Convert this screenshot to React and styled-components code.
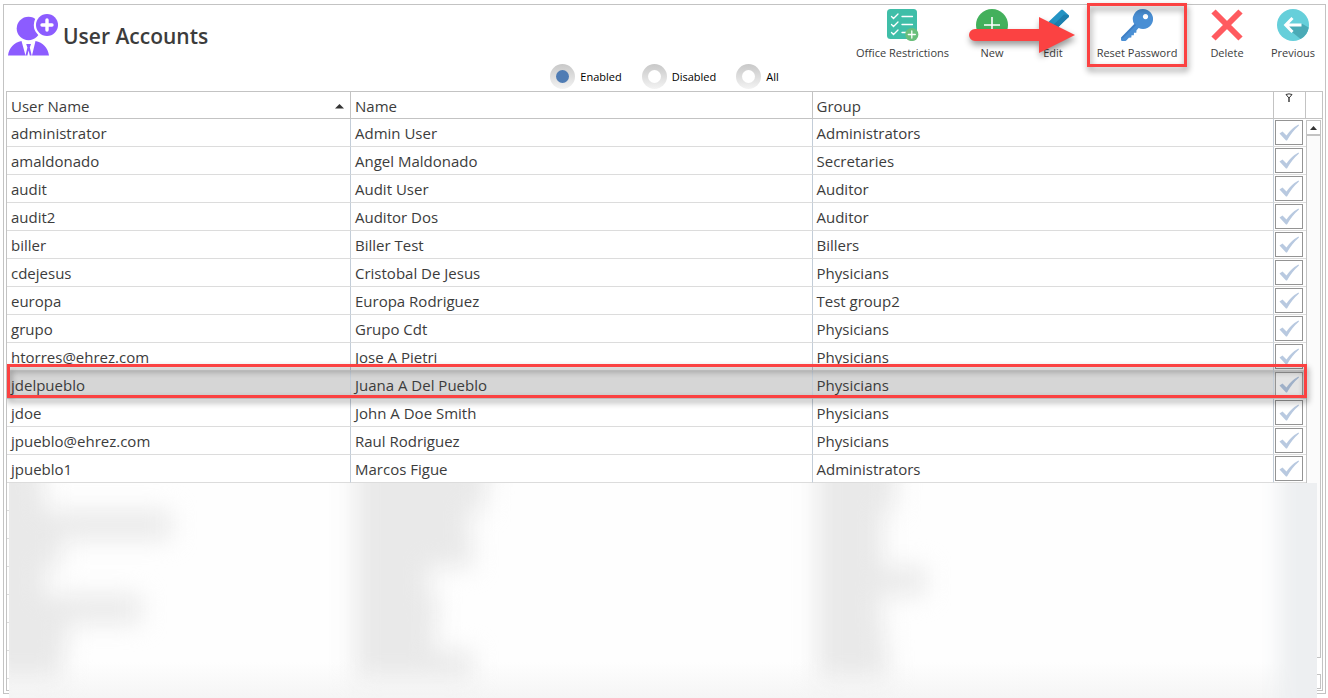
import React, { useState } from "react";
import styled, { createGlobalStyle, css } from "styled-components";

const line = "#c3c3c3";
const red = "#fb4242";

const GlobalStyle = createGlobalStyle`
  * { box-sizing: border-box; }
  body {
    margin: 0;
    background: #fff;
    color: #3c3c3c;
    font-family: "Open Sans", "Noto Sans", sans-serif;
    font-size: 15px;
    line-height: 20px;
  }
`;

const Page = styled.div`
  display: flex;
  height: 100vh;
  min-height: 520px;
  padding: 4px 2px 4px 3px;
  overflow: hidden;
`;

const Frame = styled.main`
  display: flex;
  flex: 1;
  flex-direction: column;
  min-width: 0;
  padding: 0 2px 2px;
  border: 1px solid ${line};
`;

const Header = styled.header`
  display: flex;
  justify-content: space-between;
  height: 58px;
`;

const Heading = styled.div`
  display: flex;
  align-items: center;
  gap: 5px;
  padding: 2px 0 0 2px;
`;

const Title = styled.h1`
  margin: 0;
  padding-top: 2px;
  font-size: 21px;
  font-weight: 600;
  line-height: 28px;
`;

const Toolbar = styled.nav`
  position: relative;
  display: flex;
`;

const ToolButton = styled.button`
  position: relative;
  display: flex;
  flex-direction: column;
  align-items: center;
  gap: 4px;
  width: ${(p) => p.$width}px;
  padding: 4px 0 0;
  border: 0;
  background: none;
  color: inherit;
  font: inherit;
  font-size: 11px;
  line-height: 16px;
  white-space: nowrap;
  cursor: pointer;

  ${(p) =>
    p.$marked &&
    css`
      &::after {
        content: "";
        position: absolute;
        inset: -2px 4px -4px;
        border: 3px solid ${red};
        filter: drop-shadow(1px 4px 3px rgba(0, 0, 0, 0.45));
      }
    `}
`;

const Arrow = styled.svg`
  position: absolute;
  top: 10px;
  right: 247px;
  z-index: 1;
  overflow: visible;
  filter: drop-shadow(1px 4px 3px rgba(0, 0, 0, 0.4));
  pointer-events: none;
`;

const Filters = styled.fieldset`
  display: flex;
  justify-content: center;
  gap: 20px;
  height: 28px;
  margin: 0;
  padding: 1px 0 0;
  border: 0;
`;

const FilterLabel = styled.label`
  display: flex;
  align-items: center;
  gap: 5px;
  color: #000;
  font-size: 11px;
  line-height: 16px;
`;

const Radio = styled.input.attrs({ type: "radio" })`
  appearance: none;
  display: grid;
  place-items: center;
  width: 25px;
  height: 25px;
  margin: 0;
  border-radius: 50%;
  background: linear-gradient(#c8c8c8, #f3f3f3);

  &::before {
    content: "";
    width: 13px;
    height: 13px;
    border-radius: 50%;
    background: #fff;
  }
  &:checked::before { background: #4f7cb4; }
`;

const GridArea = styled.section`
  position: relative;
  display: flex;
  flex: 1;
  min-height: 0;
`;

const GridFrame = styled.div`
  display: flex;
  flex: 1;
  min-width: 0;
  border: 1px solid ${line};
  overflow: hidden;
`;

const TableArea = styled.div`
  flex: 1;
  min-width: 0;
`;

const Table = styled.table`
  width: 100%;
  border-collapse: separate;
  border-spacing: 0;
  table-layout: fixed;
`;

const Col = styled.col`
  width: ${(p) => p.$width || "auto"};
`;

const HeadCell = styled.th`
  height: 27px;
  padding: 2px 6px 0 4px;
  border-right: 1px solid ${line};
  border-bottom: 1px solid ${line};
  font-weight: 400;
  text-align: left;
`;

const HeadContent = styled.span`
  display: flex;
  align-items: center;
  justify-content: space-between;
`;

const FilterHead = styled(HeadCell)`
  padding: 0 2px 0 0;
  text-align: center;
  vertical-align: top;
  line-height: 8px;
`;

const Cell = styled.td`
  height: 28px;
  padding: 1px 4px 0;
  border-right: 1px solid #c3cdd8;
  border-bottom: 1px solid #dcdcdc;
  white-space: nowrap;
`;

const CheckCell = styled(Cell)`
  padding: 0 0 0 1px;
  border-right: 0;
`;

const Row = styled.tr`
  position: relative;

  ${(p) =>
    p.$selected &&
    css`
      background: #d6d6d6;
      > td:first-child::after {
        content: "";
        position: absolute;
        z-index: 1;
        inset: -7px -1px 1px 0;
        border: 3px solid ${red};
        filter: drop-shadow(1px 4px 3px rgba(0, 0, 0, 0.45));
        pointer-events: none;
      }
    `}
`;

const CheckBox = styled.label`
  display: grid;
  place-items: center;
  width: 28px;
  height: 25px;
  border: 1px solid #949494;
  background: ${(p) => (p.$selected ? "#e4e4e4" : "#fff")};
  color: ${(p) => (p.$selected ? "#9fb0c8" : "#b8c9e0")};

  > * { grid-area: 1 / 1; }
`;

const Tick = styled.input.attrs({ type: "checkbox" })`
  appearance: none;
  width: 26px;
  height: 23px;
  margin: 0;

  &:not(:checked) + svg { visibility: hidden; }
`;

const ScrollColumn = styled.div`
  display: flex;
  flex-direction: column;
  width: 16px;
  padding: 28px 1px 1px 0;
  background: linear-gradient(${line}, ${line}) 0 26px / 100% 1px no-repeat;
`;

const ScrollButton = styled.button`
  display: grid;
  place-items: center;
  height: 15px;
  padding: 0;
  border: 1px solid ${line};
  background: #fff;
`;

const Thumb = styled.div`
  flex: 1;
  margin-bottom: 16px;
  border: 1px solid ${line};
  background: #fbfbfb;
`;

const Redacted = styled.div`
  position: absolute;
  inset: 392px 6px -7px 3px;
  z-index: 2;
  display: grid;
  grid-template-columns: 342px 1fr 1fr 42px;
  background: linear-gradient(to top, #f5f5f5, #fefefe 36px);
  overflow: hidden;
`;

const BlurColumn = styled.div`
  display: flex;
  flex-direction: column;
  margin-left: ${(p) => (p.$bleed ? -24 : 4)}px;
  margin-top: -28px;
  filter: blur(12px);
`;

const BlurBar = styled.div`
  flex: 0 0 28px;
  width: ${(p) => p.$width}px;
  background: #e9e9e9;
`;

const BlurEdge = styled.div`
  margin: -20px -20px -20px 4px;
  background: #edeff1;
  filter: blur(10px);
`;

const UserIcon = () => (
  <svg width="50" height="42" viewBox="0 0 50 42" aria-hidden="true">
    <circle cx="20.5" cy="14.5" r="11.8" fill="#8c5cff" />
    <circle cx="39" cy="11" r="13.2" fill="#fff" />
    <circle cx="39" cy="11" r="11" fill="#8c5cff" />
    <path d="M39 6v10M34 11h10" stroke="#fff" strokeWidth="3.4" strokeLinecap="round" />
    <path d="M0 41.5C1 34 6 28.5 13.5 27L17.5 41.5ZM27.5 27C35 28.5 40 34 41 41.5H24Z" fill="#8c5cff" />
    <path d="M18.200 30h4.800l-1.200 3.500 1.900 8h-1.900l-1.200-5-1.200 5h-1.900l1.900-8Z" fill="#8c5cff" />
  </svg>
);

const ChecklistIcon = () => (
  <svg width="32" height="32" viewBox="0 0 32 32" aria-hidden="true">
    <rect width="30" height="30" rx="3.500" fill="#3fbea8" />
    <path
      d="m4.500 7.500 2 2L11 5M4.500 15.500l2 2L11 13M4.500 23.500l2 2L11 21M15 7.500h10.500M15 15.500h10.500M15 23.500h4"
      fill="none"
      stroke="#fff"
      strokeWidth="1.300"
      strokeLinecap="round"
    />
    <circle cx="24.800" cy="25.500" r="6.600" fill="#6abf7b" />
    <path d="M24.800 22v7M21.300 25.500h7" stroke="#fff" strokeWidth="1.300" strokeLinecap="round" />
  </svg>
);

const NewIcon = () => (
  <svg width="32" height="32" viewBox="0 0 32 32" aria-hidden="true">
    <circle cx="16" cy="16" r="16" fill="#43b05c" />
    <path d="M16 8v16M8 16h16" stroke="#fff" strokeWidth="1.600" />
  </svg>
);

const EditIcon = () => (
  <svg width="32" height="32" viewBox="0 0 32 32" aria-hidden="true">
    <path d="M24 1q1-1 2 0l5.500 5q1 1 0 2L11 28l-7.500-7.500Z" fill="#2494c4" />
    <path d="m31.500 6 .4 1.200-.4 1L11 28l-3.500-3.500L27 5.500Z" fill="#1d7fae" />
    <path d="M3.500 20.500 11 28 0 31.500Z" fill="#f1c58c" />
  </svg>
);

const KeyIcon = () => (
  <svg width="32" height="32" viewBox="0 0 32 32" aria-hidden="true">
    <path
      fillRule="evenodd"
      fill="#4a8fd4"
      d="M22 0a10 10 0 1 1-4.300 19L15.500 21.200l-.2 2.500-2.300.1-.2 2.400-2.300.1-.2 2.300-2.400.1L5.300 31.400Q4.500 32 3.700 32H1.200Q0 32 0 30.800V28.500L13.200 15A10 10 0 0 1 22 0Zm2.500 5a2.600 2.600 0 1 0 .01 0Z"
    />
    <path d="M1 29 14.500 15.500" stroke="#3e7dc2" strokeWidth="1.500" />
  </svg>
);

const DeleteIcon = () => (
  <svg width="32" height="32" viewBox="0 0 32 32" aria-hidden="true">
    <path d="m2.500 2.500 27 27M29.500 2.500l-27 27" stroke="#ff5a5f" strokeWidth="6" />
  </svg>
);

const PreviousIcon = () => (
  <svg width="32" height="32" viewBox="0 0 32 32" aria-hidden="true">
    <circle cx="16" cy="16" r="16" fill="#66cfda" />
    <path d="m15 23 8.500 7.100A16 16 0 0 0 31.700 18.500L25 14.800l-8 1.200-7 1.500Z" fill="#4aaab6" />
    <path d="M24.500 16H9M15.500 9 8.700 16l6.800 7" fill="none" stroke="#fff" strokeWidth="3" />
  </svg>
);

const tools = [
  { label: "Office Restrictions", width: 117, Icon: ChecklistIcon },
  { label: "New", width: 62, Icon: NewIcon },
  { label: "Edit", width: 60, Icon: EditIcon },
  { label: "Reset Password", width: 108, Icon: KeyIcon, marked: true },
  { label: "Delete", width: 72, Icon: DeleteIcon },
  { label: "Previous", width: 60, Icon: PreviousIcon },
];

const users = [
  ["administrator", "Admin User", "Administrators"],
  ["amaldonado", "Angel Maldonado", "Secretaries"],
  ["audit", "Audit User", "Auditor"],
  ["audit2", "Auditor Dos", "Auditor"],
  ["biller", "Biller Test", "Billers"],
  ["cdejesus", "Cristobal De Jesus", "Physicians"],
  ["europa", "Europa Rodriguez", "Test group2"],
  ["grupo", "Grupo Cdt", "Physicians"],
  ["htorres@ehrez.com", "Jose A Pietri", "Physicians"],
  ["jdelpueblo", "Juana A Del Pueblo", "Physicians"],
  ["jdoe", "John A Doe Smith", "Physicians"],
  ["jpueblo@ehrez.com", "Raul Rodriguez", "Physicians"],
  ["jpueblo1", "Marcos Figue", "Administrators"],
];

const hiddenRows = [0, 1, 2, 3, 4, 5, 6, 7];

const blurred = [
  [56, 60, 186, 76, 60, 156, 82, 78],
  [134, 130, 114, 118, 74, 82, 80, 118],
  [80, 78, 66, 66, 108, 64, 68, 72],
];

export default function App() {
  const [status, setStatus] = useState("Enabled");

  return (
    <Page>
      <GlobalStyle />
      <Frame>
        <Header>
          <Heading>
            <UserIcon />
            <Title>User Accounts</Title>
          </Heading>
          <Toolbar aria-label="Actions">
            {tools.map(({ label, width, Icon, marked }) => (
              <ToolButton key={label} type="button" $width={width} $marked={marked}>
                <Icon />
                {label}
              </ToolButton>
            ))}
            <Arrow width="107" height="40" viewBox="0 0 107 40" aria-hidden="true">
              <path d="M6 14H70V2L106 20 70 38V26H6A6 6 0 0 1 6 14Z" fill={red} />
            </Arrow>
          </Toolbar>
        </Header>

        <Filters aria-label="Status">
          {["Enabled", "Disabled", "All"].map((option) => (
            <FilterLabel key={option}>
              <Radio name="status" checked={status === option} onChange={() => setStatus(option)} />
              {option}
            </FilterLabel>
          ))}
        </Filters>

        <GridArea>
          <GridFrame>
            <TableArea>
              <Table>
                <colgroup>
                  <Col $width="344px" />
                  <Col />
                  <Col />
                  <Col $width="32px" />
                </colgroup>
                <thead>
                  <tr>
                    <HeadCell scope="col" aria-sort="ascending">
                      <HeadContent>
                        User Name
                        <svg width="9" height="5" viewBox="0 0 9 5" aria-hidden="true">
                          <path d="M0 4.500 4.500 0 9 4.500Z" fill="#333" />
                        </svg>
                      </HeadContent>
                    </HeadCell>
                    <HeadCell scope="col">Name</HeadCell>
                    <HeadCell scope="col">Group</HeadCell>
                    <FilterHead scope="col" aria-label="Filter">
                      <svg width="8" height="9" viewBox="0 0 8 9" aria-hidden="true">
                        <path d="M1 1.500Q4 .2 7 1.500L4.500 4.500h-1Z" fill="#fff" stroke="#333" />
                        <path d="M4 4v5" stroke="#333" strokeWidth="1.400" />
                      </svg>
                    </FilterHead>
                  </tr>
                </thead>
                <tbody>
                  {users.map(([login, name, group]) => {
                    const selected = login === "jdelpueblo";
                    return (
                      <Row key={login} $selected={selected} aria-selected={selected}>
                        <Cell>{login}</Cell>
                        <Cell>{name}</Cell>
                        <Cell>{group}</Cell>
                        <CheckCell>
                          <CheckBox $selected={selected}>
                            <Tick defaultChecked aria-label={`${name} active`} />
                            <svg width="20" height="17" viewBox="0 0 20 17" aria-hidden="true">
                              <path
                                d="M.5 9.500 3.500 7.500 7.500 11.500Q12 4.500 19.500.5L20 1.500Q13 7.500 8 16.500H7Z"
                                fill="currentColor"
                              />
                            </svg>
                          </CheckBox>
                        </CheckCell>
                      </Row>
                    );
                  })}
                  {hiddenRows.map((n) => (
                    <Row key={n}>
                      <Cell />
                      <Cell />
                      <Cell />
                      <CheckCell />
                    </Row>
                  ))}
                </tbody>
              </Table>
            </TableArea>
            <ScrollColumn>
              <ScrollButton type="button" aria-label="Scroll up">
                <svg width="7" height="4" viewBox="0 0 7 4" aria-hidden="true">
                  <path d="M0 4 3.500 0 7 4Z" fill="#333" />
                </svg>
              </ScrollButton>
              <Thumb />
              <ScrollButton type="button" aria-label="Scroll down">
                <svg width="7" height="4" viewBox="0 0 7 4" aria-hidden="true">
                  <path d="M0 0h7L3.500 4Z" fill="#333" />
                </svg>
              </ScrollButton>
            </ScrollColumn>
          </GridFrame>
          <Redacted aria-hidden="true">
            {blurred.map((widths, column) => (
              <BlurColumn key={column} $bleed={column === 0}>
                {widths.map((width, n) => (
                  <BlurBar key={n} $width={width} />
                ))}
              </BlurColumn>
            ))}
            <BlurEdge />
          </Redacted>
        </GridArea>
      </Frame>
    </Page>
  );
}
